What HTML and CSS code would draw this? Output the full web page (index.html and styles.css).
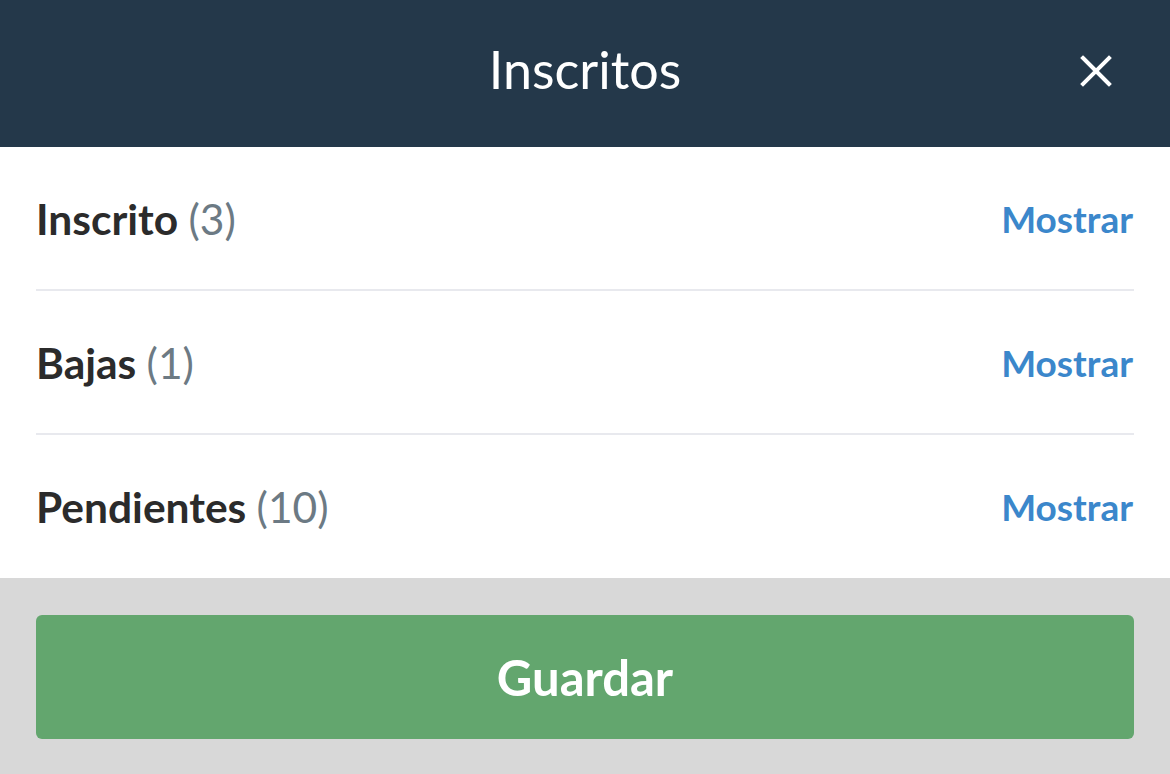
FILE: index.html
```html
<!DOCTYPE html>
<html lang="es">
<head>
<meta charset="UTF-8">
<title>Inscritos</title>
<link rel="stylesheet" href="styles.css">
</head>
<body>

<!-- ===== HEADER ===== -->
<div class="header">
  <div class="title">Inscritos</div>
  <div class="close">
    <svg width="32" height="32" viewBox="0 0 32 32">
      <path d="M3 3 L29 29 M29 3 L3 29" stroke="#fff" stroke-width="4" stroke-linecap="square"/>
    </svg>
  </div>
</div>

<!-- ===== LIST ===== -->
<div class="list">
  <div class="row">
    <div class="label">Inscrito <span class="count">(3)</span></div>
    <a class="show">Mostrar</a>
  </div>
  <div class="row">
    <div class="label">Bajas <span class="count">(1)</span></div>
    <a class="show">Mostrar</a>
  </div>
  <div class="row">
    <div class="label">Pendientes <span class="count">(10)</span></div>
    <a class="show">Mostrar</a>
  </div>
</div>

<!-- ===== FOOTER ===== -->
<div class="footer">
  <button class="save">Guardar</button>
</div>

</body>
</html>
```

FILE: styles.css
```css
body {
  margin: 0;
  font-family: Lato, "Open Sans", sans-serif;
  background: #d8d8d8;
  height: 774px;
  overflow: hidden;
}

/* ===== HEADER ===== */
.header {
  height: 147px;
  box-sizing: border-box;
  padding-bottom: 10px;
  background: #24384a;
  display: flex;
  align-items: center;
  justify-content: center;
  position: relative;
}

.title {
  color: #fff;
  font-size: 52px;
  font-weight: 400;
}

.close {
  position: absolute;
  right: 58px;
  top: 55px;
  width: 32px;
  height: 32px;
}

/* ===== LIST ===== */
.list {
  background: #fff;
  padding: 0 36px;
}

.row {
  height: 142px;
  display: flex;
  align-items: center;
  justify-content: space-between;
  border-bottom: 2px solid #e8e9ee;
}

.row:last-child {
  border-bottom: none;
  height: 143px;
}

.label {
  font-size: 42.5px;
  font-weight: 700;
  color: #2b2b2b;
}

.count {
  font-weight: 400;
  color: #6c7a84;
}

.show {
  font-size: 37px;
  font-weight: 700;
  color: #3b87cb;
  margin-right: 1px;
}

/* ===== FOOTER ===== */
.footer {
  padding: 37px 36px;
}

.save {
  width: 100%;
  height: 124px;
  border: none;
  border-radius: 6px;
  background: #63a66e;
  color: #fff;
  font-family: Lato, sans-serif;
  font-size: 49px;
  font-weight: 700;
}
```
